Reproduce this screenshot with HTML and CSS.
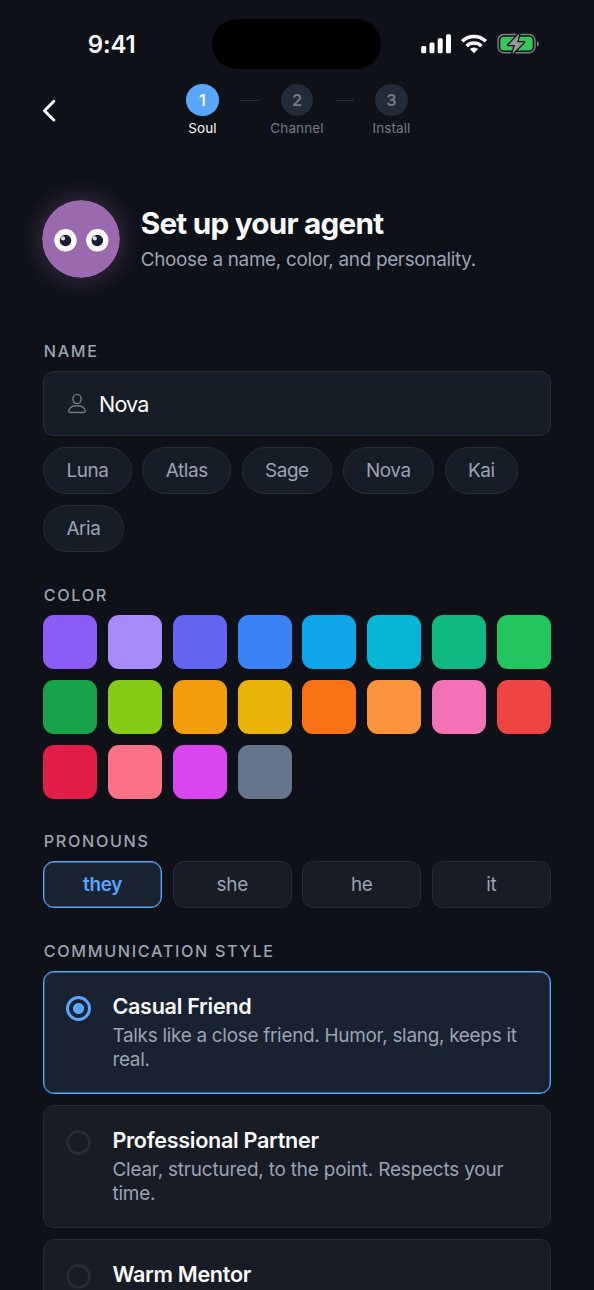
FILE: index.html
```html
<!DOCTYPE html>
<html lang="en">
<head>
<meta charset="utf-8">
<title>Set up your agent</title>
<link rel="stylesheet" href="styles.css">
</head>
<body>
<div class="screen">
  <header class="statusbar">
    <div class="time">9:41</div>
    <div class="island"></div>
    <svg class="status-icons" width="120" height="22" viewBox="420 33 120 22">
      <g fill="#fff">
        <rect x="421.2" y="46" width="5" height="7.2" rx="1.5"/>
        <rect x="429.5" y="42.4" width="5" height="10.8" rx="1.5"/>
        <rect x="437.7" y="38.2" width="5" height="15" rx="1.5"/>
        <rect x="446" y="34.2" width="5" height="19" rx="1.5"/>
        <path d="M474 53.2l-4.1-4.1a6.1 6.1 0 0 1 8.2 0z"/>
      </g>
      <g fill="none" stroke="#fff" stroke-width="3.5">
        <path d="M462.2 41.2a17 17 0 0 1 23.6 0"/>
        <path d="M466.6 45.9a10.7 10.7 0 0 1 14.8 0"/>
      </g>
      <rect x="498" y="34.5" width="37" height="18.3" rx="6" fill="none" stroke="#7e7f83" stroke-width="1.4"/>
      <path d="M537 41.2c2.6.8 2.6 4.4 0 5.2z" fill="#7e7f83"/>
      <rect x="500.3" y="36.8" width="32.4" height="13.7" rx="3.8" fill="#34c759"/>
      <path d="M519.3 33.5L508.3 45h6.7l-2.8 9 11.8-11.8h-6.8z" fill="#98989b" stroke="#0e1118" stroke-width="2.6" stroke-linejoin="round" paint-order="stroke"/>
    </svg>
  </header>

  <nav class="topnav">
    <svg class="back" width="18" height="26" viewBox="0 0 18 26"><path d="M11.8 3.3L2.5 12.7l9.3 9.3" fill="none" stroke="#fff" stroke-width="3" stroke-linecap="round" stroke-linejoin="round"/></svg>
    <div class="steps">
      <div class="step active"><span class="num">1</span><span class="step-label">Soul</span></div>
      <i class="line"></i>
      <div class="step"><span class="num">2</span><span class="step-label">Channel</span></div>
      <i class="line"></i>
      <div class="step"><span class="num">3</span><span class="step-label">Install</span></div>
    </div>
  </nav>

  <section class="hero">
    <svg class="avatar" width="78" height="78" viewBox="0 0 78 78">
      <circle cx="39" cy="39" r="39" fill="#9b69ad"/>
      <circle cx="23.5" cy="40.3" r="11.2" fill="#fff"/>
      <circle cx="55.3" cy="40.3" r="11.2" fill="#fff"/>
      <circle cx="23.5" cy="40.5" r="5.8" fill="#1c1930"/>
      <circle cx="55.3" cy="40.5" r="5.8" fill="#1c1930"/>
      <circle cx="21" cy="38.4" r="2.1" fill="#e4e2e9"/>
      <circle cx="52.8" cy="38.4" r="2.1" fill="#e4e2e9"/>
    </svg>
    <div>
      <h1>Set up your agent</h1>
      <p class="subtitle">Choose a name, color, and personality.</p>
    </div>
  </section>

  <section class="group name">
    <h2>NAME</h2>
    <div class="input">
      <svg width="20" height="22" viewBox="0 0 20 22" fill="none" stroke="#737986" stroke-width="1.4"><ellipse cx="10" cy="6" rx="4.1" ry="4.6"/><path d="M3.3 19.500c-1.200 0-1.800-.8-1.500-2 .8-2.900 4.100-4.700 8.200-4.700s7.400 1.800 8.200 4.700c.3 1.200-.3 2-1.500 2z"/></svg>
      <span>Nova</span>
    </div>
    <div class="chips">
      <span class="chip">Luna</span><span class="chip">Atlas</span><span class="chip">Sage</span><span class="chip">Nova</span><span class="chip">Kai</span><span class="chip">Aria</span>
    </div>
  </section>

  <section class="group color">
    <h2>COLOR</h2>
    <div class="swatches">
      <i class="violet"></i><i class="lavender"></i><i class="indigo"></i><i class="blue"></i><i class="sky"></i><i class="cyan"></i><i class="emerald"></i><i class="green"></i>
      <i class="forest"></i><i class="lime"></i><i class="amber"></i><i class="yellow"></i><i class="orange"></i><i class="peach"></i><i class="pink"></i><i class="red"></i>
      <i class="crimson"></i><i class="rose"></i><i class="fuchsia"></i><i class="slate"></i>
    </div>
  </section>

  <section class="group">
    <h2>PRONOUNS</h2>
    <div class="pronouns">
      <span class="pronoun selected">they</span><span class="pronoun">she</span><span class="pronoun">he</span><span class="pronoun">it</span>
    </div>
  </section>

  <section class="group">
    <h2>COMMUNICATION STYLE</h2>
    <article class="card selected">
      <i class="radio"></i>
      <div><h3>Casual Friend</h3><p>Talks like a close friend. Humor, slang, keeps it<br>real.</p></div>
    </article>
    <article class="card">
      <i class="radio"></i>
      <div><h3>Professional Partner</h3><p>Clear, structured, to the point. Respects your<br>time.</p></div>
    </article>
    <article class="card">
      <i class="radio"></i>
      <div><h3>Warm Mentor</h3></div>
    </article>
  </section>
</div>
</body>
</html>
```
FILE: styles.css
```css
* { box-sizing: border-box; margin: 0; }
body {
  background: #0e1118;
  color: #f9fafb;
  font-family: Inter, "Liberation Sans", sans-serif;
}
.screen { height: 1290px; overflow: hidden; padding: 0 43.2px; }
svg { display: block; flex: none; }

.statusbar {
  height: 84px;
  padding-top: 19px;
  display: grid;
  grid-template-columns: 169.3px 169px 1fr;
  align-items: start;
}
.time { font-size: 24px; font-weight: 600; line-height: 52px; padding-left: 44.5px; letter-spacing: -.1px; }
.island { height: 50px; border-radius: 25px; background: #000; }
.status-icons { margin: 14px 0 0 38.5px; }

.topnav { height: 116px; display: grid; grid-template-columns: 132.3px 243px; }
.back { margin: 14px 0 0 -1.2px; }
.steps { display: flex; gap: 10.8px; }
.step { width: 54px; display: flex; flex-direction: column; align-items: center; gap: 4px; color: #737a89; }
.num {
  width: 32.4px; height: 32.4px; border-radius: 50%;
  background: #232a38;
  font-size: 16.2px; font-weight: 600; line-height: 32.4px; text-align: center;
}
.step-label { font-size: 13.5px; line-height: 17px; letter-spacing: .1px; }
.step.active { color: #f9fafb; }
.active .num { background: #58a6ff; }
.line { width: 18.9px; height: 1.4px; margin-top: 16px; background: #252c39; }

.hero { display: flex; align-items: center; gap: 20.5px; height: 78px; margin-left: -1px; }
.avatar { border-radius: 50%; box-shadow: 0 0 27px rgba(155, 105, 173, .4); }
h1 { font-size: 29.7px; line-height: 36px; font-weight: 700; letter-spacing: -.75px; margin-top: -1px; }
.subtitle { font-size: 18.9px; line-height: 24px; margin-top: 7.5px; color: #9ca3b2; letter-spacing: -.31px; }

.group { margin-top: 32.5px; }
.group.name { margin-top: 63.3px; }
.group.color { margin-top: 33px; }
h2 { font-size: 16.2px; line-height: 20px; font-weight: 550; letter-spacing: 1.65px; color: #9ca3b2; margin: 0 0 10.2px .6px; }
.input {
  height: 64.5px; border: 1px solid #262d39; border-radius: 11px; background: #171d26;
  display: flex; align-items: center; gap: 12px; padding-left: 22.8px;
  font-size: 21.6px; letter-spacing: -.85px;
}
.chips { display: flex; flex-wrap: wrap; gap: 10.8px; margin-top: 11px; }
.chip {
  height: 47px; padding: 0 22.2px; border: 1px solid #262d39; border-radius: 24px; background: #171d26;
  font-size: 18.9px; line-height: 46px; color: #9ca3b2; letter-spacing: -.38px;
}

.swatches { display: grid; grid-template-columns: repeat(8, 54px); grid-auto-rows: 54px; gap: 10.8px; }
.swatches i { border-radius: 11px; }
.violet { background: #8b5cf6; }
.lavender { background: #a78bfa; }
.indigo { background: #6366f1; }
.blue { background: #3b82f6; }
.sky { background: #0ea5e9; }
.cyan { background: #06b6d4; }
.emerald { background: #10b981; }
.green { background: #22c55e; }
.forest { background: #16a34a; }
.lime { background: #84cc16; }
.amber { background: #f59e0b; }
.yellow { background: #eab308; }
.orange { background: #f97316; }
.peach { background: #fb923c; }
.pink { background: #f472b6; }
.red { background: #ef4444; }
.crimson { background: #e11d48; }
.rose { background: #fb7185; }
.fuchsia { background: #d946ef; }
.slate { background: #64748b; }

.pronouns { display: grid; grid-template-columns: repeat(4, 1fr); gap: 10.8px; }
.pronoun {
  height: 47px; border: 1px solid #262a36; border-radius: 11px; background: #171c25;
  text-align: center; font-size: 18.9px; line-height: 45px; color: #9ca3b2; letter-spacing: -.2px;
}
.pronoun.selected { border-color: #58a6ff; background: #182231; color: #58a6ff; font-weight: 600; box-shadow: inset 0 0 0 .4px #58a6ff; }

.card {
  height: 123.2px; margin-bottom: 10.8px; padding: 21.4px 21.6px 0;
  border: 1px solid #262a36; border-radius: 11px; background: #171c25;
  display: flex; gap: 21.6px;
}
.card.selected { border-color: #58a6ff; background: #182231; box-shadow: inset 0 0 0 .4px #58a6ff; }
.radio { width: 25px; height: 25px; flex: none; border: 3px solid #262b37; border-radius: 50%; margin-top: 2.6px; }
.selected .radio { border-color: #58a6ff; background: radial-gradient(circle, #58a6ff 5.2px, transparent 5.9px); }
h3 { font-size: 21.6px; line-height: 26px; font-weight: 600; letter-spacing: -.3px; }
.card p { font-size: 18.9px; line-height: 24.3px; margin-top: 4.4px; color: #9ca3b2; letter-spacing: -.17px; white-space: nowrap; }
.card.selected p { letter-spacing: -.27px; }
```
